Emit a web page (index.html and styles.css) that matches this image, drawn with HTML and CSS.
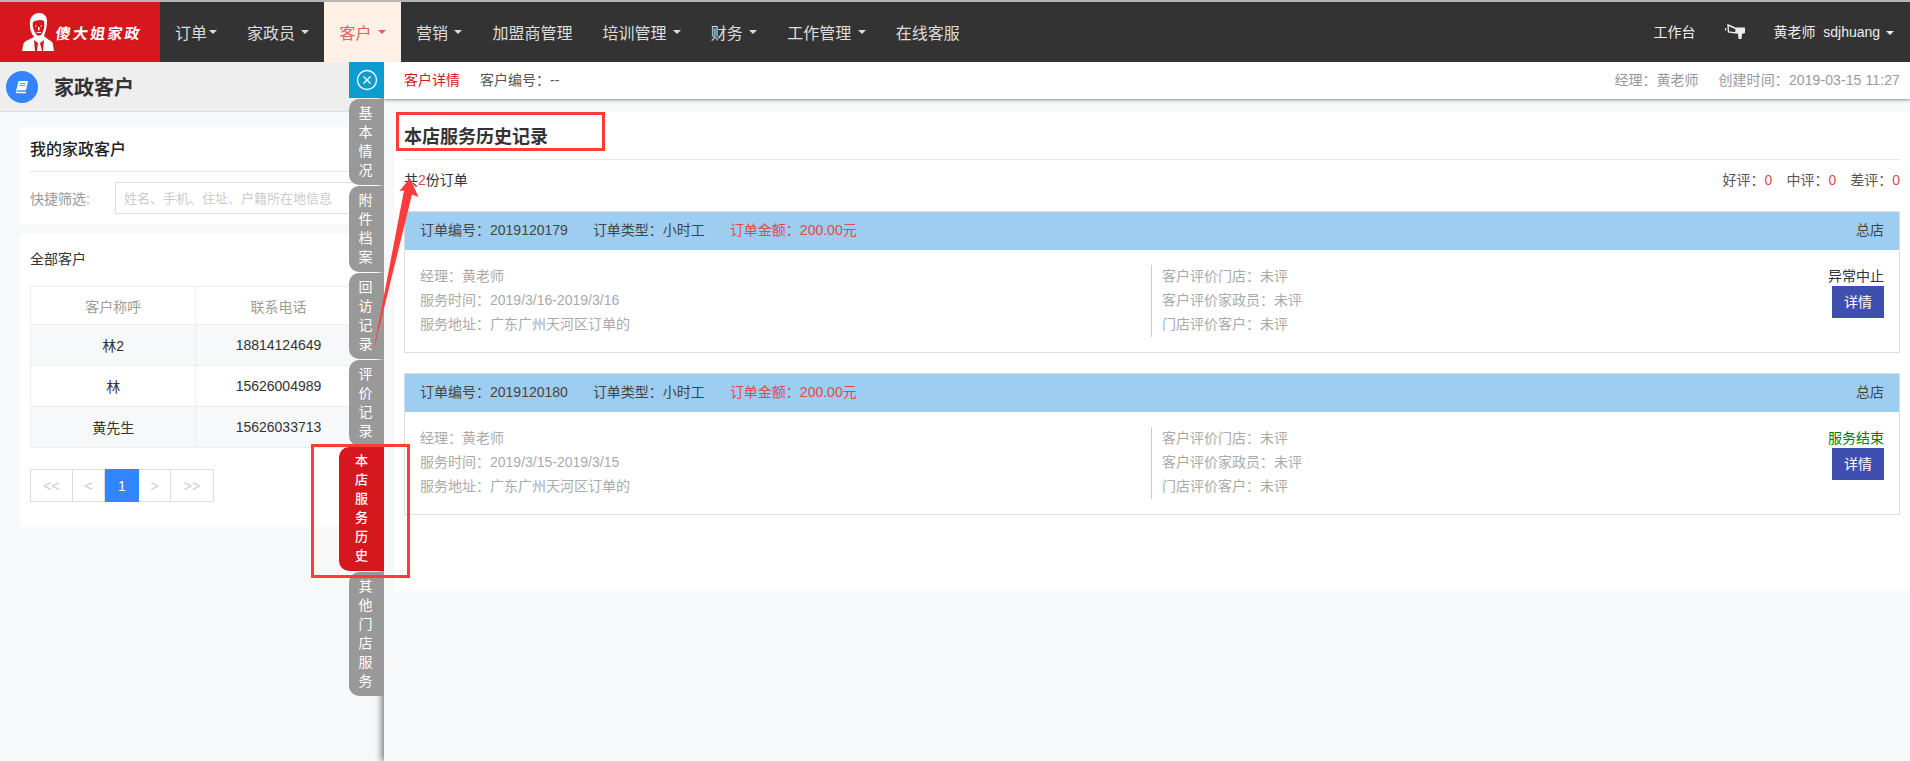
FILE: index.html
```html
<!DOCTYPE html>
<html lang="zh">
<head>
<meta charset="utf-8">
<title>家政客户</title>
<link rel="stylesheet" href="styles.css">
</head>
<body>
<header class="topbar">
  <a class="logo">
    <svg class="logo-person" viewBox="0 0 32 38" width="32" height="38">
      <path fill="#fff" d="M8 13C7 5 11 0 17 0c5 0 8 3 8 8 0 5-1 9-2 12l-1 3 5 4c3 1 4 3 4 5l1 6H0l1-5c0-3 2-5 5-6l6-3c-2-3-4-6-4-11z"/>
      <path fill="#d6171e" d="M11 9c3-2 8-3 11-1 1 5 0 10-3 14-2 1-4 1-5-1-2-3-4-7-3-12z"/>
      <path fill="#fff" d="M13 12.500h1.500v1H13zM18.500 12.500H20v1h-1.500zM16 14h1.500v3.500H16zM14.500 19h4.500v1h-4.500z"/>
      <path fill="#d6171e" d="M12 27l4 3-1 8h-2zM22 27l-4 3 2 8h1z"/>
    </svg>
    <span class="logo-text">傻大姐家政</span>
  </a>
  <nav class="nav">
    <a class="nav-item tight">订单<i class="caret"></i></a>
    <a class="nav-item">家政员 <i class="caret"></i></a>
    <a class="nav-item active">客户 <i class="caret"></i></a>
    <a class="nav-item">营销 <i class="caret"></i></a>
    <a class="nav-item">加盟商管理</a>
    <a class="nav-item">培训管理 <i class="caret"></i></a>
    <a class="nav-item">财务 <i class="caret"></i></a>
    <a class="nav-item">工作管理 <i class="caret"></i></a>
    <a class="nav-item">在线客服</a>
  </nav>
  <div class="user-area">
    <span>工作台</span>
    <svg class="horn" viewBox="0 0 20 15" width="20" height="15">
      <path fill="none" stroke="#eee" stroke-width="1.400" d="M3 1l8 3.500V9L3.500 8z"/>
      <path fill="#eee" d="M11 3.500h9V9l-3 1-.5 5h-3l-.5-5.500H11z"/>
      <path fill="#eee" d="M0 4h1.200v2.500H0z"/>
    </svg>
    <span class="user-name">黄老师  sdjhuang <i class="caret"></i></span>
  </div>
</header>

<div class="workspace">
  <section class="page-left">
    <div class="page-title">
      <span class="title-icon">
        <svg viewBox="0 0 14 14" width="14" height="14">
          <path fill="#fff" d="M3.500 1H13l-2 9.500H2.500L1 12.500 1.300 10z"/>
          <path fill="#fff" d="M1.300 11.500h9.700l-.3 1.800H1.800c-.8 0-1-.8-.5-1.800z"/>
          <path fill="none" stroke="#3385ff" stroke-width=".8" d="M5 3.500h5.500M4.500 5.500H10M1.800 11H11"/>
        </svg>
      </span>
      <h1>家政客户</h1>
    </div>
    <div class="left-body">
      <div class="panel filter-panel">
        <h2>我的家政客户</h2>
        <div class="filter-row">
          <label>快捷筛选:</label>
          <input class="filter-input" type="text" placeholder="姓名、手机、住址、户籍所在地信息">
        </div>
      </div>
      <div class="panel list-panel">
        <div class="list-title">全部客户</div>
        <table class="customers">
          <thead>
            <tr><th>客户称呼</th><th>联系电话</th><th></th></tr>
          </thead>
          <tbody>
            <tr><td>林2</td><td>18814124649</td><td></td></tr>
            <tr><td>林</td><td>15626004989</td><td></td></tr>
            <tr><td>黄先生</td><td>15626033713</td><td></td></tr>
          </tbody>
        </table>
        <div class="pager">
          <a class="wide">&lt;&lt;</a><a>&lt;</a><a class="current">1</a><a>&gt;</a><a class="wide">&gt;&gt;</a>
        </div>
      </div>
    </div>
  </section>

  <div class="side-tabs">
    <a class="tab-close">
      <svg viewBox="0 0 22 22" width="22" height="22">
        <circle cx="11" cy="11" r="9.500" fill="none" stroke="#fff" stroke-width="1.300"/>
        <path fill="none" stroke="#fff" stroke-width="1.300" d="M7.500 7.500l7 7M14.500 7.500l-7 7"/>
      </svg>
    </a>
    <a class="tab">基本情况</a>
    <a class="tab">附件档案</a>
    <a class="tab">回访记录</a>
    <a class="tab">评价记录</a>
    <a class="tab tab-active">本店服务历史</a>
    <a class="tab">其他门店服务</a>
  </div>

  <section class="drawer">
    <div class="drawer-bar">
      <span class="bar-current">客户详情</span>
      <span class="bar-code">客户编号：--</span>
      <span class="bar-right">经理：黄老师</span>
      <span class="bar-time">创建时间：2019-03-15 11:27</span>
    </div>
    <div class="drawer-body">
      <div class="history">
        <h2 class="history-title">本店服务历史记录</h2>
        <div class="history-summary">
          <span>共<em>2</em>份订单</span>
          <span class="scores">
            <span>好评：<em>0</em></span>
            <span>中评：<em>0</em></span>
            <span>差评：<em>0</em></span>
          </span>
        </div>

        <article class="order">
          <div class="order-head">
            <span>订单编号：2019120179</span>
            <span>订单类型：小时工</span>
            <span class="amount">订单金额：200.00元</span>
            <span class="shop">总店</span>
          </div>
          <div class="order-body">
            <div class="order-info">
              <p>经理：黄老师</p>
              <p>服务时间：2019/3/16-2019/3/16</p>
              <p>服务地址：广东广州天河区订单的</p>
            </div>
            <div class="order-rates">
              <p>客户评价门店：未评</p>
              <p>客户评价家政员：未评</p>
              <p>门店评价客户：未评</p>
            </div>
            <div class="order-state">
              <p>异常中止</p>
              <a class="detail-btn">详情</a>
            </div>
          </div>
        </article>

        <article class="order">
          <div class="order-head">
            <span>订单编号：2019120180</span>
            <span>订单类型：小时工</span>
            <span class="amount">订单金额：200.00元</span>
            <span class="shop">总店</span>
          </div>
          <div class="order-body">
            <div class="order-info">
              <p>经理：黄老师</p>
              <p>服务时间：2019/3/15-2019/3/15</p>
              <p>服务地址：广东广州天河区订单的</p>
            </div>
            <div class="order-rates">
              <p>客户评价门店：未评</p>
              <p>客户评价家政员：未评</p>
              <p>门店评价客户：未评</p>
            </div>
            <div class="order-state">
              <p class="done">服务结束</p>
              <a class="detail-btn">详情</a>
            </div>
          </div>
        </article>
      </div>
    </div>
  </section>
</div>

<svg class="marks" viewBox="0 0 1910 761" width="1910" height="761">
  <rect x="397.500" y="113.500" width="206" height="36" fill="none" stroke="#ff3b3b" stroke-width="3"/>
  <rect x="312.500" y="445.500" width="96" height="131" fill="none" stroke="#ff3b3b" stroke-width="3"/>
  <path fill="#ff3b3b" d="M410 178L418.500 197 412 194.500 373 353 404 190.500 399.500 191z"/>
</svg>
</body>
</html>
```
FILE: styles.css
```css
* { box-sizing: border-box; }

html, body {
  margin: 0;
  height: 761px;
  overflow: hidden;
}

body {
  position: relative;
  display: flex;
  flex-direction: column;
  font-family: "Liberation Sans", "Noto Sans CJK SC", sans-serif;
  font-size: 14px;
  color: #333;
  background: #f7f8fa;
}

h1, h2, p { margin: 0; font-weight: normal; }
em { font-style: normal; color: #e04a4a; }

/* top bar */
.topbar {
  flex: none;
  display: flex;
  height: 62px;
  border-top: 2px solid #b5b5b5;
  background: #333;
  color: #ddd;
}

.logo {
  flex: none;
  display: flex;
  align-items: center;
  width: 160px;
  padding-left: 22px;
  background: #d6171e;
}

.logo-person { flex: none; margin-top: -1px; }

.logo-text {
  margin-left: 2px;
  font-size: 15px;
  font-weight: 700;
  letter-spacing: 2.200px;
  color: #fff;
  white-space: nowrap;
  transform: skewX(-8deg);
}

.nav { display: flex; }

.nav-item {
  display: flex;
  align-items: center;
  padding: 0 15px;
  font-size: 16px;
  white-space: pre;
}

.nav-item.active {
  background: #fff0e6;
  color: #e0605a;
}

.caret {
  display: inline-block;
  width: 0;
  height: 0;
  margin-left: 2px;
  vertical-align: middle;
  border-top: 4px solid currentColor;
  border-left: 4px solid transparent;
  border-right: 4px solid transparent;
}

.user-area {
  margin-left: auto;
  display: flex;
  align-items: center;
  gap: 29px;
  padding: 0 16px 2px 0;
  font-size: 14px;
  color: #eee;
}

.user-name { white-space: pre; }

/* main area */
.workspace {
  position: relative;
  flex: 1;
  min-height: 0;
  overflow: hidden;
}

.page-title {
  display: flex;
  align-items: center;
  height: 50px;
  padding-left: 6px;
  background: #eee;
  border-bottom: 1px solid #ddd;
}

.title-icon {
  display: flex;
  align-items: center;
  justify-content: center;
  width: 32px;
  height: 32px;
  border-radius: 50%;
  background: #3385ff;
}

.page-title h1 {
  margin-left: 16px;
  font-size: 20px;
  font-weight: 700;
  color: #333;
}

.left-body { padding: 15px 0 0 20px; }

.panel {
  background: #fff;
  padding: 0 10px;
}

.filter-panel { height: 97px; margin-bottom: 10px; }

.filter-panel h2 {
  height: 45px;
  line-height: 45px;
  font-size: 16px;
  font-weight: 500;
  color: #222;
  border-bottom: 1px solid #e7e7e7;
}

.filter-row {
  display: flex;
  align-items: center;
  gap: 22px;
  padding-top: 10px;
}

.filter-row label { width: 63px; font-size: 14px; color: #999; white-space: nowrap; }

.filter-input {
  width: 400px;
  height: 32px;
  padding: 0 8px;
  border: 1px solid #ddd;
  font: 13px "Liberation Sans", "Noto Sans CJK SC", sans-serif;
}

.filter-input::placeholder { color: #ccc; opacity: 1; }

.list-panel { height: 293px; }

.list-title {
  height: 52px;
  line-height: 50px;
  font-size: 14px;
  color: #333;
}

.customers {
  width: 497px;
  table-layout: fixed;
  border-collapse: collapse;
  text-align: center;
}

.customers th, .customers td {
  border: 1px solid #eee;
  padding: 0;
}

.customers th {
  height: 38px;
  font-weight: normal;
  color: #a39c95;
}

.customers td { height: 41px; }
.customers tbody tr:nth-child(odd) td { background: #f7f8fa; }

.pager {
  display: flex;
  margin-top: 21px;
  width: 184px;
  height: 33px;
  border: 1px solid #ddd;
}

.pager a {
  flex: none;
  width: 32px;
  display: flex;
  align-items: center;
  justify-content: center;
  color: #ccc;
  border-right: 1px solid #ddd;
}

.pager a:last-child { border-right: 0; }
.pager .wide { width: 42px; }

.pager .current {
  width: 34px;
  margin: -1px 0;
  background: #3385ff;
  color: #fff;
  border-right: 0;
}

/* tabs that sit over the page, on the left edge of the drawer */
.side-tabs {
  position: absolute;
  z-index: 3;
  top: 0;
  left: 339px;
  width: 45px;
  display: flex;
  flex-direction: column;
  align-items: flex-end;
  gap: 1px;
}

.tab-close {
  display: flex;
  align-items: center;
  justify-content: center;
  width: 35px;
  height: 36px;
  background: #0d9ccf;
}

.tab {
  display: block;
  width: 35px;
  padding: 5px 11px 5px 9px;
  font-size: 14px;
  line-height: 19px;
  text-align: center;
  color: #fff;
  background: #999;
  border-radius: 10px 0 0 10px;
}

.tab-active {
  width: 45px;
  padding: 4px 15px 6px;
  background: #d6171e;
  font-weight: 500;
  font-size: 13px;
}

/* drawer */
.drawer {
  position: absolute;
  z-index: 2;
  top: 0;
  right: 0;
  bottom: 0;
  left: 384px;
  display: flex;
  flex-direction: column;
  background: #f7f8fa;
  box-shadow: -3px 0 6px rgba(0, 0, 0, .45);
}

.drawer-bar {
  flex: none;
  display: flex;
  align-items: center;
  height: 37px;
  padding: 0 10px 3px 20px;
  background: #fff;
  box-shadow: 0 1px 3px rgba(0, 0, 0, .45);
}

.bar-current { color: #d6171e; }
.bar-code { margin-left: 20px; color: #555; }
.bar-right { margin-left: auto; color: #999; }
.bar-time { margin-left: 20px; color: #999; letter-spacing: .1px; }

.drawer-body {
  flex: 1;
  padding: 13px 0 0 10px;
}

.history {
  height: 479px;
  padding: 0 10px;
  background: #fff;
}

.history-title {
  height: 48px;
  padding-top: 10px;
  line-height: 30px;
  font-size: 18px;
  font-weight: 700;
  color: #333;
  border-bottom: 1px solid #e7e7e7;
}

.history-summary {
  display: flex;
  justify-content: space-between;
  height: 40px;
  margin-bottom: 11px;
  line-height: 40px;
}

.scores { display: flex; gap: 14px; color: #555; }

.order {
  height: 142px;
  margin-bottom: 20px;
  border: 1px solid #ddd;
}

.order-head {
  display: flex;
  gap: 25px;
  height: 38px;
  padding: 0 15px;
  line-height: 36px;
  color: #444;
  background: #9dcdf0;
}

.order-head .amount { color: #e04a4a; }
.order-head .shop { margin-left: auto; }

.order-body {
  display: flex;
  padding: 15px 15px 0;
  color: #aaa;
}

.order-body p { line-height: 24px; }

.order-info { flex: none; width: 731px; margin-top: -1px; }

.order-rates {
  flex: 1;
  height: 72px;
  padding-left: 10px;
  border-left: 1px solid #ccc;
}

.order-rates p { position: relative; top: -1px; }

.order-state {
  display: flex;
  flex-direction: column;
  align-items: flex-end;
  padding-top: 1px;
  color: #333;
}

.order-state p { line-height: 20px; }
.order-state .done { color: #008000; }

.detail-btn {
  width: 52px;
  height: 32px;
  line-height: 32px;
  text-align: center;
  color: #fff;
  background: #3f4fb0;
}

/* hand-drawn marks over the screenshot */
.marks {
  position: absolute;
  z-index: 5;
  top: 0;
  left: 0;
  pointer-events: none;
}
```
